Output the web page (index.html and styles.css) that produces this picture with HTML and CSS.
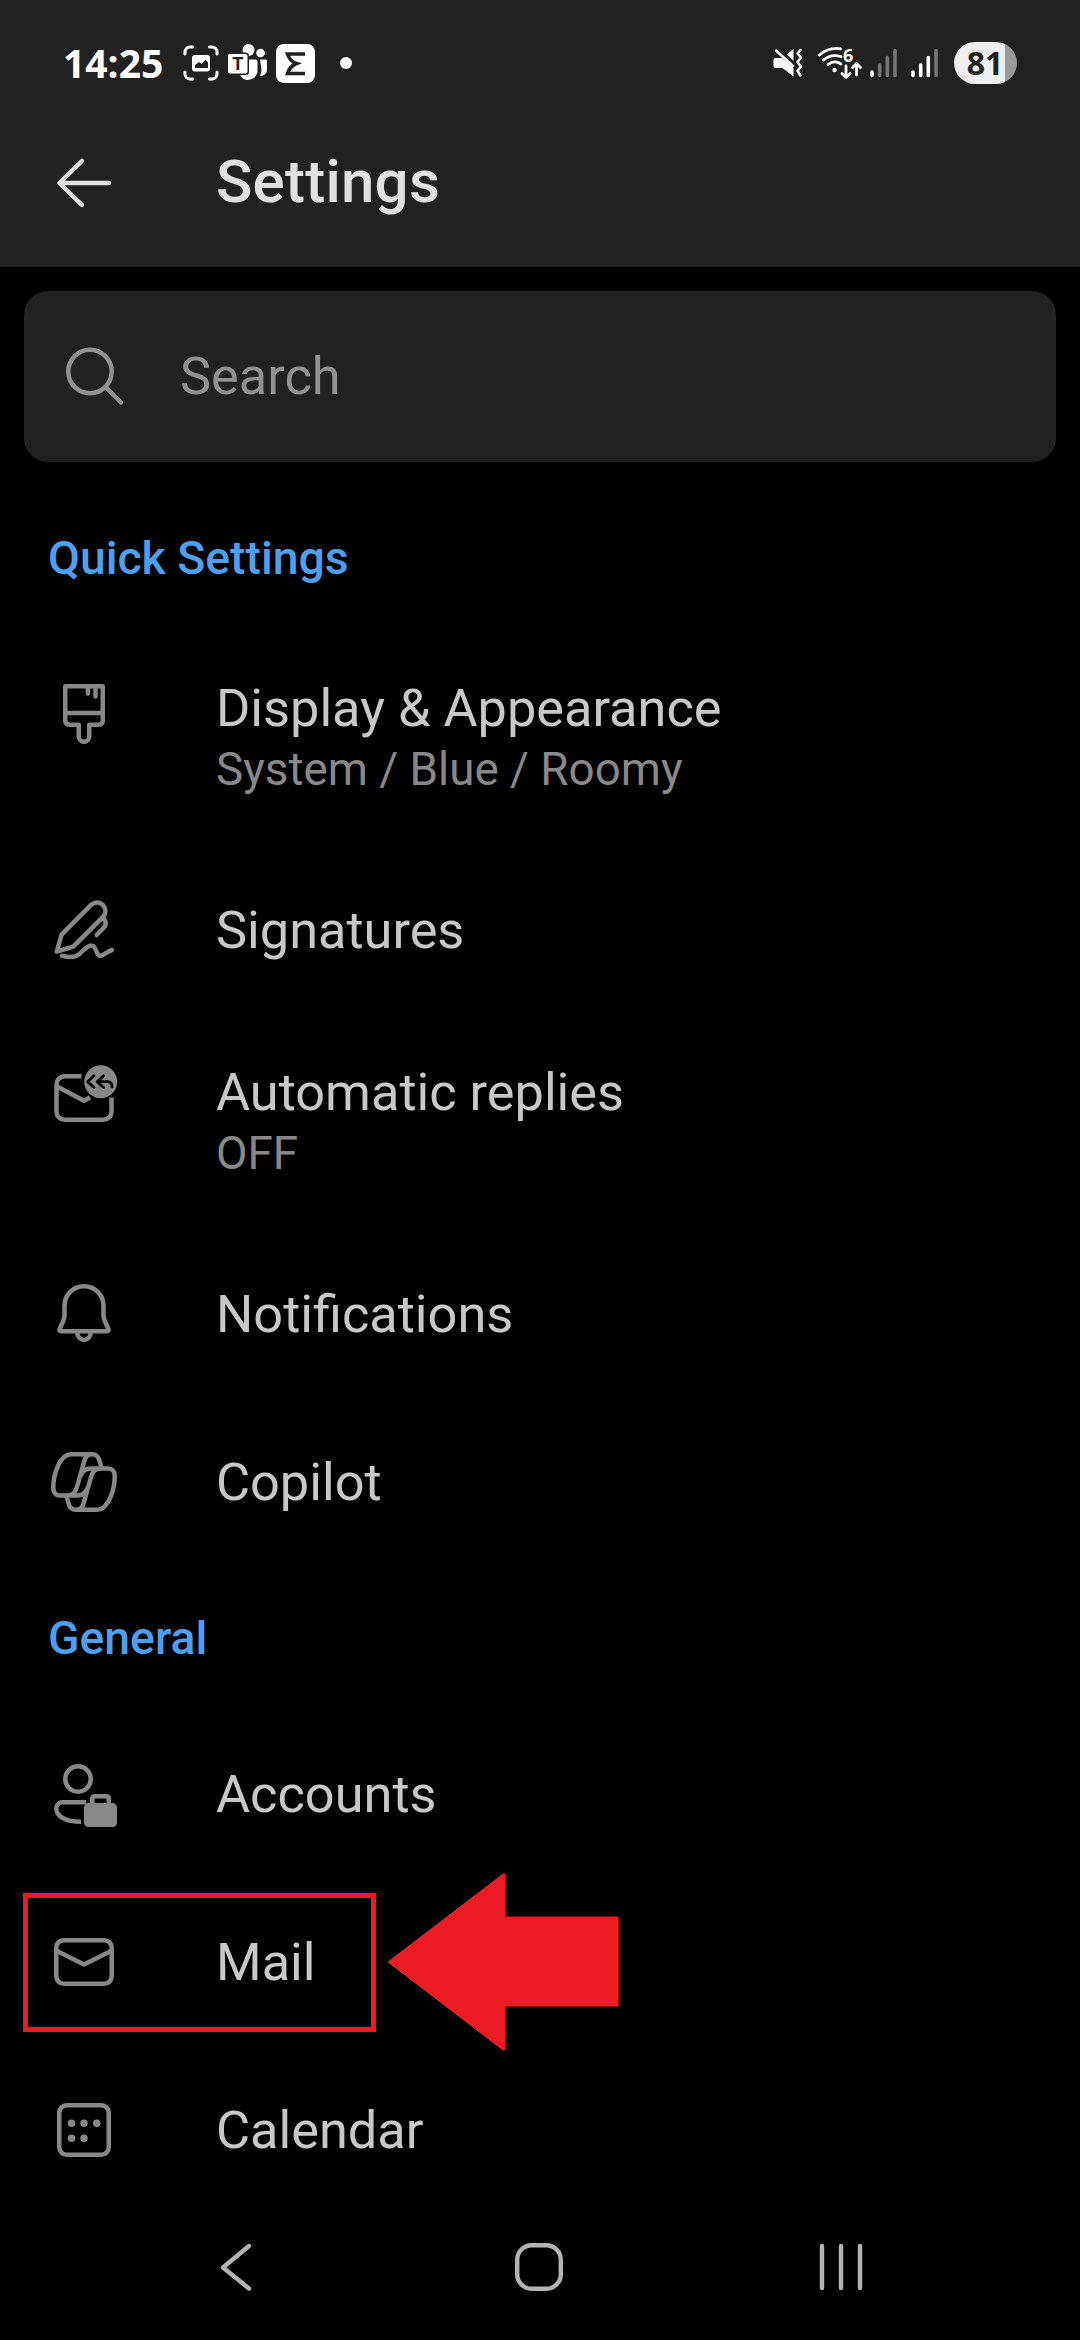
FILE: index.html
```html
<!DOCTYPE html>
<html lang="en">
<head>
<meta charset="utf-8">
<title>Settings</title>
<link rel="stylesheet" href="styles.css">
</head>
<body>
<div class="screen">
  <header class="topbar">
    <div class="status">
      <div class="status-left">
        <span class="clock">14:25</span>
        <svg class="status-capture" width="36" height="36" viewBox="0 0 36 36" fill="none" stroke="#fff" stroke-width="3" stroke-linecap="round">
          <path d="M2 9V7a5 5 0 0 1 5-5h2.500M26.500 2H29a5 5 0 0 1 5 5v2M34 27v2a5 5 0 0 1-5 5h-2.500M9.500 34H7a5 5 0 0 1-5-5v-2"/>
          <rect x="9" y="10" width="18" height="16.500" rx="3" fill="#fff" stroke="none"/>
          <path d="M12 23v-3l4-3 2.500 2 4-4.500 2.500 3V23z" fill="#212121" stroke="none"/>
        </svg>
        <svg class="status-teams" width="40" height="38" viewBox="0 0 40 38" fill="#fff">
          <circle cx="20.500" cy="6" r="6"/>
          <circle cx="32.500" cy="9" r="4.300"/>
          <path d="M32 15.500h5.500a1.500 1.500 0 0 1 1.500 1.500v8.500c0 4-3 6.500-7 6.500q1.500-3 1.500-6z"/>
          <path d="M13 15.500h14.500q2 0 2 2v10.500a9.500 9.500 0 0 1-17 4z"/>
          <rect x="-1.500" y="8.500" width="22.500" height="22.500" rx="3.500" fill="#212121"/>
          <rect x="0" y="10" width="19.500" height="19.500" rx="2"/>
          <text x="9.800" y="26" class="teams-letter" text-anchor="middle">T</text>
        </svg>
        <svg class="status-app" width="39" height="39" viewBox="0 0 39 39">
          <rect width="39" height="39" rx="8" fill="#fff"/>
          <path d="M29 10H11.500Q14 17.500 20.500 19.500Q14 22 11.500 29.500H29" fill="none" stroke="#212121" stroke-width="3.600"/>
        </svg>
        <span class="status-dot"></span>
      </div>
      <div class="status-right">
        <svg class="status-mute" width="30" height="30" viewBox="0 0 30 30">
          <path d="M2.500 10H9L20.500 20V28.500L9.500 20H2.500Q.5 20 .5 18V12Q.5 10 2.500 10zM13 7L20.500 1V14.500z" fill="#fff"/>
          <path d="M6 1L23 17" stroke="#212121" stroke-width="2.500"/>
          <path d="M3 2.500L20 18M27.500 2L24.500 5.500 28 9.500 24.500 14 28 18.500 24.500 23 27.500 27.500" fill="none" stroke="#fff" stroke-width="2.500" stroke-linecap="round" stroke-linejoin="round"/>
        </svg>
        <svg class="status-wifi" width="46" height="34" viewBox="0 0 46 34" fill="none" stroke="#fff" stroke-width="2.800" stroke-linecap="round">
          <path d="M2.500 9Q12 1 23.500 2.800M6.500 14Q14 7.500 24 10.500M11 18.500Q17.500 13.500 24 18"/>
          <circle cx="17.500" cy="24" r="2.200" fill="#fff" stroke="none"/>
          <text x="26" y="16" class="wifi-gen">6</text>
          <path d="M29 20V31M25 27.500L29 31.500 33 27.500M39.500 29V18M35.500 21.500L39.500 17.500 43.500 21.500" stroke-linejoin="round"/>
        </svg>
        <svg class="status-sim1" width="28" height="30" viewBox="0 0 28 30" stroke="#757575" stroke-width="3.600" stroke-linecap="round">
          <path d="M2 24v3.500" stroke="#fff"/><path d="M9.700 17v10.500M17.300 9.500v18M25 2.500v25"/>
        </svg>
        <svg class="status-sim2" width="28" height="30" viewBox="0 0 28 30" stroke="#fff" stroke-width="3.600" stroke-linecap="round">
          <path d="M2 24v3.500M9.700 17v10.500M17.300 9.500v18"/><path d="M25 2.500v25" stroke="#757575"/>
        </svg>
        <span class="battery">81</span>
      </div>
    </div>
    <div class="title-row">
      <svg width="72" height="72" viewBox="0 0 72 72" fill="none" stroke="#e1e1e1" stroke-width="4.500" stroke-linecap="round" stroke-linejoin="round">
        <path d="M34 14L11.500 36 34 58M12 36H61"/>
      </svg>
      <h1 class="title">Settings</h1>
    </div>
  </header>

  <main class="content">
    <div class="search">
      <svg width="72" height="72" viewBox="0 0 72 72" fill="none" stroke="#919191" stroke-width="4.500" stroke-linecap="round">
        <circle cx="30" cy="30.500" r="21.700"/><path d="M46 46.500L61 61.500"/>
      </svg>
      <span class="search-text">Search</span>
    </div>

    <h2 class="section">Quick Settings</h2>
    <div class="row row-double">
      <svg class="icon" viewBox="0 0 72 72">
        <path d="M17.250 8.250H54.750V42.500Q54.750 46.750 50.500 46.750H41.250V58.500a5.250 5.250 0 0 1-10.500 0V46.750H21.500Q17.250 46.750 17.250 42.500zM17.250 35H54.750"/>
        <path d="M40 9V15.500M47.500 9V18.500"/>
      </svg>
      <div class="label"><span class="name">Display &amp; Appearance</span><span class="detail">System / Blue / Roomy</span></div>
    </div>
    <div class="row">
      <svg class="icon" viewBox="0 0 72 72">
        <path d="M43.300 10.700a8.500 8.500 0 0 1 12 12L25.300 52.700 8.800 57.500 13.600 40.700z"/>
        <path d="M55.500 24.500Q60 29.500 55.500 34L48.800 41"/>
        <path d="M14 61.800Q25 65 31.500 60C36 56 39.500 51 43.500 51.500C49 52 47.500 61 52 61.800C55.500 62 59 57.500 64 56"/>
      </svg>
      <div class="label"><span class="name">Signatures</span></div>
    </div>
    <div class="row row-double">
      <svg class="icon" viewBox="0 0 72 72">
        <path d="M33.500 14.250H16.500a8 8 0 0 0-8 8V49.750a8 8 0 0 0 8 8H55.500a8 8 0 0 0 8-8V35.500M9 24.500L36 38.800 42 35.500" stroke-linecap="butt"/>
        <circle cx="52.700" cy="19.700" r="16.500" fill="#888" stroke="none"/>
        <path d="M46 13.700L39.700 19.700 46 25.500M55.500 13.700L49.200 19.700 55.500 25.500M50 19.700H59.500Q64 19.700 64 25" class="badge-arrow"/>
      </svg>
      <div class="label"><span class="name">Automatic replies</span><span class="detail">OFF</span></div>
    </div>
    <div class="row">
      <svg class="icon" viewBox="0 0 72 72">
        <path d="M36 8.250A19.500 19.500 0 0 0 16.500 27.750V37.500Q16.500 40.500 15 43.500L11.500 51.200Q11 53.200 13 53.200H59Q61 53.200 60.500 51.200L57 43.500Q55.500 40.500 55.500 37.500V27.750A19.500 19.500 0 0 0 36 8.250zM29.300 54.500a6.700 7.500 0 0 0 13.400 0"/>
      </svg>
      <div class="label"><span class="name">Notifications</span></div>
    </div>
    <div class="row">
      <svg class="icon" viewBox="0 0 72 72">
        <g id="copilot-half"><path d="M53.500 22L51.500 14.500Q49.500 8.250 44.500 8.250H23C11 8.250 5.250 30 5.250 42C5.250 47 8 49.500 12 49.500H29Q36.500 49.500 39 43M44.500 8.250C39 8.250 37.500 10.500 36 16L29.500 39C27.500 46.500 25.500 49.500 19 49.500"/></g>
        <use href="#copilot-half" transform="rotate(180 36 36)"/>
      </svg>
      <div class="label"><span class="name">Copilot</span></div>
    </div>

    <h2 class="section">General</h2>
    <div class="row">
      <svg class="icon" viewBox="0 0 72 72">
        <circle cx="30" cy="21" r="12.750"/>
        <path d="M38 44.250H14.500a6.250 6.250 0 0 0-6.250 6.250C8.250 58 17 63.750 33 63.750" stroke-linecap="butt"/>
        <rect x="36" y="45" width="33" height="24" rx="4.500" fill="#888" stroke="none"/>
        <path d="M44.250 46V41Q44.250 38.250 47 38.250H58Q60.750 38.250 60.750 41V46"/>
      </svg>
      <div class="label"><span class="name">Accounts</span></div>
    </div>
    <div class="row">
      <svg class="icon" viewBox="0 0 72 72">
        <rect x="8.250" y="14.250" width="55.500" height="43.500" rx="7.500"/>
        <path d="M9 25L36 38.500 63 25"/>
      </svg>
      <div class="label"><span class="name">Mail</span></div>
      <span class="highlight"></span>
      <svg class="pointer" width="232" height="180" viewBox="0 0 232 180"><path d="M1 90L116 2H118V45H231V134H118V178H116z" fill="#ed1c24" stroke="#ed1c24" stroke-linejoin="round"/></svg>
    </div>
    <div class="row">
      <svg class="icon" viewBox="0 0 72 72">
        <rect x="11.250" y="11.250" width="49.500" height="49.500" rx="7.500"/>
        <g fill="#888" stroke="none"><circle cx="23.500" cy="29.300" r="3.750"/><circle cx="36" cy="29.300" r="3.750"/><circle cx="48.700" cy="29.300" r="3.750"/><circle cx="23.500" cy="44.200" r="3.750"/><circle cx="36" cy="44.200" r="3.750"/></g>
      </svg>
      <div class="label"><span class="name">Calendar</span></div>
    </div>
  </main>

  <nav class="navbar">
    <svg width="60" height="60" viewBox="0 0 60 60"><path d="M43 9L17 30.500 43 51.500" /></svg>
    <svg width="60" height="60" viewBox="0 0 60 60"><rect x="8.200" y="8.200" width="43.600" height="43.600" rx="14.500"/></svg>
    <svg width="60" height="60" viewBox="0 0 60 60"><path d="M11 9V51M30 9V51M49 9V51"/></svg>
  </nav>
</div>
</body>
</html>
```
FILE: styles.css
```css
* { box-sizing: border-box; }
body { margin: 0; background: #000; font-family: Roboto, "Liberation Sans", sans-serif; }
h1, h2 { margin: 0; font-weight: 500; }
svg { display: block; flex: none; overflow: visible; }

.screen { width: 1080px; height: 2340px; display: flex; flex-direction: column; background: #000; overflow: hidden; }

.topbar { height: 267px; flex: none; background: #212121; }
.status { height: 99px; padding: 27px 63px 0 63px; display: flex; justify-content: space-between; align-items: flex-start; }
.status-left, .status-right { display: flex; align-items: center; height: 72px; }
.clock { width: 120px; font: 700 39px/72px "Open Sans", sans-serif; color: #fff; white-space: nowrap; }
.status-teams { margin-left: 9px; }
.teams-letter { font: 700 18px Roboto, sans-serif; fill: #212121; }
.status-app { margin-left: 8px; }
.status-dot { width: 12px; height: 12px; margin-left: 25px; border-radius: 50%; background: #fff; }
.status-wifi { margin-left: 14px; }
.wifi-gen { font: 700 18px "Open Sans", sans-serif; fill: #fff; stroke: none; }
.status-sim1 { margin-left: 7px; }
.status-sim2 { margin-left: 13px; }
.battery { width: 63px; height: 42px; margin-left: 15px; padding-left: 1px; padding-right: 2px; border-radius: 21px; background: linear-gradient(90deg, #eee 51px, #999 51px); color: #212121; font: 700 32px/41px "Open Sans", sans-serif; text-align: center; }

.title-row { height: 168px; padding: 48px 48px 0; display: flex; align-items: flex-start; gap: 96px; }
.title { font-size: 60px; line-height: 70px; letter-spacing: .25px; color: #e1e1e1; }

.content { flex: 1; min-height: 0; overflow: hidden; padding-top: 24px; }
.search { height: 171px; margin: 0 24px 24px; padding: 0 36px; display: flex; align-items: center; gap: 48px; border-radius: 24px; background: #212121; }
.search-text { padding-bottom: 2px; font-size: 52.3px; color: #919191; }

.section { height: 144px; padding: 44px 48px 0; font-size: 46.3px; line-height: 56px; color: #4e9ff0; }
.row { position: relative; height: 168px; padding: 48px 48px 0; display: flex; align-items: flex-start; gap: 96px; }
.row-double { height: 216px; }
.icon { width: 72px; height: 72px; fill: none; stroke: #888; stroke-width: 4.5px; stroke-linecap: round; stroke-linejoin: round; }
.badge-arrow { stroke: #000; stroke-width: 2.8px; }
.label { display: flex; flex-direction: column; gap: 2px; padding-top: 4px; }
.row-double .label { margin-top: -6px; }
.name { font-size: 52.3px; line-height: 64px; color: #c8c8c8; }
.detail { font-size: 45.8px; line-height: 56px; color: #888; }

.highlight { position: absolute; left: 23px; top: 15px; width: 353px; height: 139px; border: 5px solid #ed1c24; }
.pointer { position: absolute; left: 387px; top: -6px; }

.navbar { height: 126px; flex: none; padding: 0 88px 20px 85px; display: grid; grid-template-columns: repeat(3, 302.5px); justify-items: center; align-items: center; }
.navbar svg { fill: none; stroke: #b3b3b3; stroke-width: 4.4px; stroke-linecap: round; stroke-linejoin: round; }
```
